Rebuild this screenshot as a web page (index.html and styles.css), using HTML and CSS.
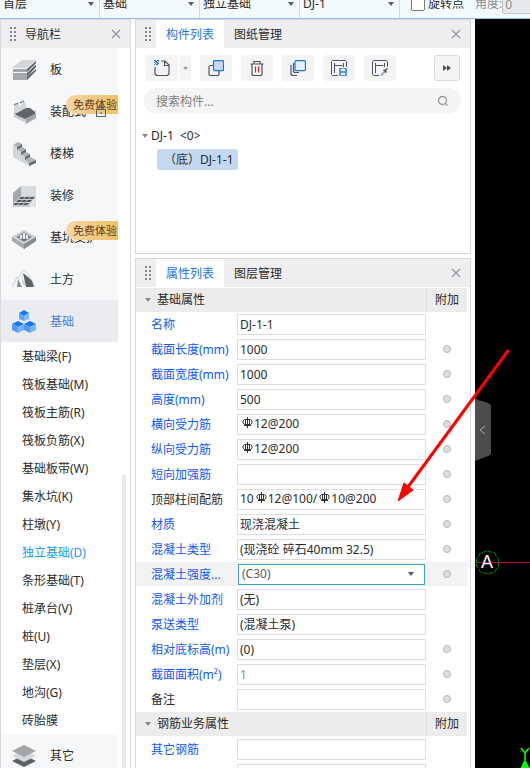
FILE: index.html
```html
<!DOCTYPE html>
<html lang="zh-CN">
<head>
<meta charset="utf-8">
<title>独立基础</title>
<link rel="stylesheet" href="styles.css">
</head>
<body>
<svg class="defs" aria-hidden="true">
  <symbol id="close" viewBox="0 0 10 10"><path d="M1 1l8 8M9 1L1 9" fill="none" stroke="#98999c" stroke-width="1.3"/></symbol>
  <symbol id="grip" viewBox="0 0 6 14"><path d="M0 0h2v2H0zM4 0h2v2H4zM0 4h2v2H0zM4 4h2v2H4zM0 8h2v2H0zM4 8h2v2H4zM0 12h2v2H0zM4 12h2v2H4z" fill="#85868a"/></symbol>
  <symbol id="down" viewBox="0 0 6 4"><path d="M0 0h6L3 4z" fill="currentColor"/></symbol>
  <symbol id="rebar" viewBox="0 0 11 12"><path d="M5.500 0v11M3.500 2v6M7.500 2v6M2 8.500h7M2.500 2.500h6l1.500 1.500v2l-1.500 1.500h-6L1 6V4z" fill="none" stroke="#333" stroke-width="1"/></symbol>
</svg>
<div class="app">
  <header class="topbar">
    <div class="pick"><select aria-label="楼层"><option>首层</option></select><svg><use href="#down"/></svg></div>
    <div class="pick"><select aria-label="类别"><option>基础</option></select><svg><use href="#down"/></svg></div>
    <div class="pick"><select aria-label="类型"><option>独立基础</option></select><svg><use href="#down"/></svg></div>
    <div class="pick"><select aria-label="构件"><option>DJ-1</option></select><svg><use href="#down"/></svg></div>
    <label class="rotate"><input type="checkbox">旋转点</label>
    <label class="angle">角度:<input type="text" value="0" disabled></label>
  </header>
  <div class="work">
    <aside class="nav">
      <div class="head"><svg class="grip"><use href="#grip"/></svg><h2>导航栏</h2><button class="close" aria-label="关闭"><svg><use href="#close"/></svg></button></div>
      <div class="navbody">
        <nav class="list">
          <a class="cat" href="#"><svg viewBox="0 0 24 24"><path d="M1 18l13 0 9-12v4l-9 12H1z" fill="#a9abad"/><path d="M1 9L10 2h14L15 10H1z" fill="#d3d5d6"/><path d="M1 11h14v3H1zM1 15h14v3H1zM1 19h14v3H1z" fill="#a5a7a9"/><path d="M15 11l9-8v2l-9 9zM15 15l9-8v2l-9 9zM15 19l9-8v2l-9 9z" fill="#5f6266"/></svg>板</a>
          <a class="cat" href="#"><svg viewBox="0 0 24 24"><path d="M2 12l9 5 13-7v5l-10 6v2L2 17z" fill="#c9cbcd"/><path d="M14 19l10-5v4l-10 6z" fill="#a4a6a9"/><path d="M3 12l6-4h9l5 4v2l-10 5-9-4z" fill="#62656a"/><path d="M2 6l5-3v4l5-5 2 1v5L5 13H2z" fill="#d4d6d7"/><path d="M2 5l4-2M8 3l4-2" stroke="#8c8f91" stroke-width="1.500"/></svg>装配式<svg class="lock" viewBox="0 0 10 12"><path d="M.5 4.500h9v7h-9zM3 4V1h4v3M5 7v2" fill="none" stroke="#555b65"/></svg><span class="badge">免费体验</span></a>
          <a class="cat" href="#"><svg viewBox="0 0 24 24"><path d="M1 3l4 2v3l4 2v3l4 2v3l4 2v4L1 15z" fill="#d3d5d6"/><path d="M1 3l5-3 4 2-5 3zM5 8l5-3 4 2-5 3zM9 13l5-3 4 2-5 3zM13 18l5-3 6 3-7 3z" fill="#b0b2b4"/><path d="M5 5l5-3v3L5 8zM9 10l5-3v3l-5 3zM13 15l5-3v3l-5 3zM17 21l7-3v3l-7 3z" fill="#66696d"/></svg>楼梯</a>
          <a class="cat" href="#"><svg viewBox="0 0 24 24"><path d="M9 2h15v11H9z" fill="#d8dadb"/><path d="M9 2v11L1 20V9z" fill="#a5a8aa"/><path d="M9 12h15l-7 11H1v-4z" fill="#c9cbcd"/><path d="M9 13h4l-2 2H7zM14 13h4l-2 2h-4zM19 13h4l-2 2h-4zM6 16h4l-2 2H4zM11 16h4l-2 2H9zM16 16h4l-2 2h-4zM3 19h4l-2 2H1zM8 19h4l-2 2H6zM13 19h4l-2 2h-4z" fill="#55585c"/><path d="M24 13v10h-6z" fill="#dfe0e1"/></svg>装修</a>
          <a class="cat" href="#"><svg viewBox="0 0 24 24"><path d="M0 11l12-7 12 7v4l-12 8-12-8z" fill="#a8aaac"/><path d="M0 11l12-7 12 7-12 7z" fill="#d3d5d6"/><path d="M4 11l8-5 8 5-8 5z" fill="#8b8e91"/><path d="M7 12l5 3 5-3-2-1-3 2-3-2z" fill="#6d7073"/><path d="M8 9h2v4H8zM11 7h2v6h-2zM14 9h2v4h-2z" fill="#eceded"/><path d="M12 18l12-7v4l-12 8z" fill="#898c8f"/></svg>基坑支护<span class="badge">免费体验</span></a>
          <a class="cat" href="#"><svg viewBox="0 0 24 24"><path d="M0 19L5 9l2 1 3-7 2-1 4 3 4 8 4 6" fill="none" stroke="#cfd1d3"/><path d="M11 5l5 4 4 4 2 6h-8z" fill="#5e6165"/><path d="M11 5v6l3 8-4-4z" fill="#d0d2d3"/><path d="M6 11l2 4 2 4H5z" fill="#8d9093"/></svg>土方</a>
          <a class="cat on" href="#"><svg viewBox="0 0 24 24"><path d="M7 3l5-3 5 3-5 3z" fill="#1877f2"/><path d="M7 3l5 3v5L7 9z" fill="#5ba4ff"/><path d="M17 3l-5 3v5l5-2z" fill="#83bcff"/><path d="M0 14l6-3 6 3-6 3zM12 14l6-3 6 3-6 3z" fill="#1877f2"/><path d="M0 14l6 3v6l-6-3zM12 14l6 3v6l-6-3z" fill="#4e9bfa"/><path d="M12 14l-6 3v6l6-3zM24 14l-6 3v6l6-3z" fill="#78b4fb"/></svg>基础</a>
          <div class="subs">
            <a href="#">基础梁(F)</a><a href="#">筏板基础(M)</a><a href="#">筏板主筋(R)</a><a href="#">筏板负筋(X)</a><a href="#">基础板带(W)</a><a href="#">集水坑(K)</a><a href="#">柱墩(Y)</a><a class="on" href="#">独立基础(D)</a><a href="#">条形基础(T)</a><a href="#">桩承台(V)</a><a href="#">桩(U)</a><a href="#">垫层(X)</a><a href="#">地沟(G)</a><a href="#">砖胎膜</a>
          </div>
          <a class="cat" href="#"><svg viewBox="0 0 24 24"><path d="M0 17l12-6 12 6-12 6z" fill="#5f6265"/><path d="M0 12l12-6 12 6-12 6z" fill="#d6d8d9"/><path d="M0 7l12-6 12 6-12 6z" fill="#a4a6a8"/></svg>其它</a>
        </nav>
        <div class="thumb"></div>
      </div>
    </aside>
    <main class="middle">
      <section class="panel">
        <div class="head"><svg class="grip"><use href="#grip"/></svg><button class="tab on">构件列表</button><button class="tab">图纸管理</button><button class="close" aria-label="关闭"><svg><use href="#close"/></svg></button></div>
        <div class="tools">
          <div class="split">
            <button class="tool" aria-label="新建"><svg viewBox="0 0 16 16"><path d="M1 7v7l1.500 1.500h11L15 14V5l-4-4H7M10.500 1v4.500H15" fill="none" stroke="#4a5263" stroke-width="1.200"/><path d="M0 0h2v1H0zM3 0h2v1H3zM1 1h2v1H1zM4 1h1v1H4zM0 2h1v1H0zM2 2h2v1H2zM1 3h1v1H1zM3 3h2v1H3zM0 4h1v1H0zM2 4h2v1H2z" fill="#1677e6"/></svg></button>
            <button class="more" aria-label="新建选项"><svg><use href="#down"/></svg></button>
          </div>
          <button class="tool" aria-label="复制"><svg viewBox="0 0 16 16"><rect x="1" y="5.500" width="10" height="10" rx="1.500" fill="none" stroke="#4a5263" stroke-width="1.200"/><rect x="5.500" y=".6" width="10" height="10" rx="1" fill="#c6d8f4" stroke="#1677e6" stroke-width="1.200"/></svg></button>
          <button class="tool" aria-label="删除"><svg viewBox="0 0 16 16"><path d="M1.500 4h13M5 4V1.500h6V4M3 4v10.500l1 1h8l1-1V4" fill="none" stroke="#4a5263" stroke-width="1.200"/><path d="M6.500 6.500v6M9.500 6.500v6" stroke="#d9202a" stroke-width="1.200"/></svg></button>
          <button class="tool" aria-label="层间复制"><svg viewBox="0 0 16 16"><path d="M3.500 3v8.500l1 1H9M1 5v9.500l1 1h5" fill="none" stroke="#4a5263" stroke-width="1.200"/><rect x="5" y=".6" width="10.400" height="10" rx="1" fill="#e6f1ff" stroke="#1677e6" stroke-width="1.200"/></svg></button>
          <button class="tool" aria-label="构件存盘"><svg viewBox="0 0 16 16"><path d="M7 15.500H1.500l-1-1v-13l1-1h13l1 1V7M3.500 3v10M3.500 5.500h8M12.500 3v4" fill="none" stroke="#4a5263"/><path d="M8 8h8v8H8z" fill="#4d9af2"/><path d="M10 9h4v2h-4zM10 13h4v2h-4z" fill="#fff"/></svg></button>
          <button class="tool" aria-label="构件提取"><svg viewBox="0 0 16 16"><path d="M7 15.500H1.500l-1-1v-13l1-1h13l1 1V7M3.500 3v10M3.500 5.500h8M12.500 3v4" fill="none" stroke="#4a5263"/><path d="M9 15.500l4-4" stroke="#8fabd2" stroke-width="2"/><path d="M11.500 9.500l3 3M13 11l2.500-2.500" stroke="#4a5263" stroke-width="1.500"/></svg></button>
          <button class="next" aria-label="更多"><svg viewBox="0 0 8 6"><path d="M0 0l4 3-4 3zM4 0l4 3-4 3z" fill="#4a5263"/></svg></button>
        </div>
        <label class="search"><input type="text" placeholder="搜索构件..." aria-label="搜索构件"><svg viewBox="0 0 12 12"><circle cx="5.500" cy="5.500" r="4" fill="none" stroke="#999" stroke-width="1.300"/><path d="M8 8l2.500 2.500" stroke="#999" stroke-width="1.300"/></svg></label>
        <div class="tree">
          <div class="root"><svg><use href="#down"/></svg>DJ-1  &lt;0&gt;</div>
          <a class="leaf" href="#">（底）DJ-1-1</a>
        </div>
      </section>
      <section class="panel props">
        <div class="head"><svg class="grip"><use href="#grip"/></svg><button class="tab on">属性列表</button><button class="tab">图层管理</button><button class="close" aria-label="关闭"><svg><use href="#close"/></svg></button></div>
        <form class="grid">
          <div class="group"><h3><svg><use href="#down"/></svg>基础属性</h3><span>附加</span></div>
          <div class="row"><label for="f1">名称</label><input class="val" id="f1" value="DJ-1-1"></div>
          <div class="row"><label for="f2">截面长度(mm)</label><input class="val" id="f2" value="1000"><input class="dot" type="checkbox" aria-label="附加 截面长度"></div>
          <div class="row"><label for="f3">截面宽度(mm)</label><input class="val" id="f3" value="1000"><input class="dot" type="checkbox" aria-label="附加 截面宽度"></div>
          <div class="row"><label for="f4">高度(mm)</label><input class="val" id="f4" value="500"><input class="dot" type="checkbox" aria-label="附加 高度"></div>
          <div class="row"><label id="l5">横向受力筋</label><div class="val" role="textbox" contenteditable="true" spellcheck="false" aria-labelledby="l5"><svg><use href="#rebar"/></svg>12@200</div><input class="dot" type="checkbox" aria-label="附加 横向受力筋"></div>
          <div class="row"><label id="l6">纵向受力筋</label><div class="val" role="textbox" contenteditable="true" spellcheck="false" aria-labelledby="l6"><svg><use href="#rebar"/></svg>12@200</div><input class="dot" type="checkbox" aria-label="附加 纵向受力筋"></div>
          <div class="row"><label for="f7">短向加强筋</label><input class="val" id="f7"><input class="dot" type="checkbox" aria-label="附加 短向加强筋"></div>
          <div class="row"><label class="plain" id="l8">顶部柱间配筋</label><div class="val" role="textbox" contenteditable="true" spellcheck="false" aria-labelledby="l8">10<svg><use href="#rebar"/></svg>12@100/<svg><use href="#rebar"/></svg>10@200</div><input class="dot" type="checkbox" aria-label="附加 顶部柱间配筋"></div>
          <div class="row"><label for="f9">材质</label><input class="val" id="f9" value="现浇混凝土"><input class="dot" type="checkbox" aria-label="附加 材质"></div>
          <div class="row"><label for="f10">混凝土类型</label><input class="val" id="f10" value="(现浇砼 碎石40mm 32.5)"><input class="dot" type="checkbox" aria-label="附加 混凝土类型"></div>
          <div class="row active"><label for="f11">混凝土强度...</label><div class="drop"><select id="f11"><option>(C30)</option></select><svg><use href="#down"/></svg></div><input class="dot" type="checkbox" aria-label="附加 混凝土强度"></div>
          <div class="row"><label for="f12">混凝土外加剂</label><input class="val" id="f12" value="(无)"></div>
          <div class="row"><label for="f13">泵送类型</label><input class="val" id="f13" value="(混凝土泵)"></div>
          <div class="row"><label for="f14">相对底标高(m)</label><input class="val" id="f14" value="(0)"><input class="dot" type="checkbox" aria-label="附加 相对底标高"></div>
          <div class="row"><label for="f15">截面面积(m²)</label><input class="val" id="f15" value="1" disabled><input class="dot" type="checkbox" aria-label="附加 截面面积"></div>
          <div class="row"><label class="plain" for="f16">备注</label><input class="val" id="f16"><input class="dot" type="checkbox" aria-label="附加 备注"></div>
          <div class="group"><h3><svg><use href="#down"/></svg>钢筋业务属性</h3><span>附加</span></div>
          <div class="row"><label for="f17">其它钢筋</label><input class="val" id="f17"></div>
          <div class="row"><label></label><input class="val" aria-label="备用"></div>
        </form>
      </section>
    </main>
    <section class="canvas" aria-label="绘图区">
      <button class="handle" aria-label="收起"><svg viewBox="0 0 16 62"><path d="M0 0l13 4q3 1 3 3v47q0 2-3 3L0 62z" fill="#4d4d4d"/><path d="M10 27l-5 4 5 4" fill="none" stroke="#a5a5a5"/></svg></button>
      <div class="axis"></div>
      <div class="bubble"><svg viewBox="0 0 25 25"><path d="M12.500 1l7 2 4 6v7l-4 6-7 2-7-2-4-6V9l4-6z" fill="none" stroke="#008a00" stroke-dasharray="5 1"/></svg><span>A</span></div>
      <div class="ucs"><svg viewBox="0 0 10 22"><path d="M1 1l4 5 4-5M5 6v7" fill="none" stroke="#0f0" stroke-width="1.500"/><path d="M5 12l5 10H0z" fill="#0f0"/></svg></div>
      <svg class="pointer" viewBox="0 0 114 154"><path d="M110.500 2L10 139" stroke="#f00" stroke-width="3"/><path d="M0 153l6-18 9 7z" fill="#f00" stroke="#f00"/></svg>
    </section>
  </div>
</div>
</body>
</html>
```
FILE: styles.css
```css
* { box-sizing: border-box; }
body {
  margin: 0;
  font: 12px/18px "Noto Sans", "Noto Sans CJK SC", sans-serif;
  color: #2b2b2b;
  background: #fff;
}
button, input, select {
  font: inherit;
  color: inherit;
  margin: 0;
  padding: 0;
  border: 0;
  border-radius: 0;
  background: none;
  appearance: none;
  outline: 0;
}
a { color: inherit; text-decoration: none; }
h2, h3 { margin: 0; font: inherit; }
svg { display: block; flex: none; }
.defs { position: absolute; width: 0; height: 0; }

.app { display: flex; flex-direction: column; height: 100vh; overflow: hidden; }

.topbar {
  display: flex;
  flex: none;
  align-items: flex-end;
  height: 19px;
  overflow: hidden;
  white-space: nowrap;
  background: #f3fafe;
  border-bottom: 1px solid #8fc1f3;
}
.pick {
  display: flex;
  flex: none;
  align-items: center;
  width: 100px;
  height: 28px;
  padding: 0 5px 0 3px;
  border-right: 1px solid #d5d9dd;
  color: #555b68;
}
.pick select { flex: 1; min-width: 0; color: #2b2b2b; }
.pick svg { width: 6px; height: 4px; }
.rotate { display: flex; flex: none; align-items: center; height: 28px; margin-left: 11px; gap: 3px; }
.rotate input { width: 14px; height: 14px; background: #fff; border: 1px solid #777; border-radius: 2px; }
.angle { display: flex; flex: none; align-items: center; height: 28px; margin-left: 11px; color: #8b8d90; }
.angle input { width: 60px; height: 20px; padding-left: 2px; background: #e7e8ea; border: 1px solid #c5c8cb; border-radius: 2px; }

.work { display: flex; flex: 1; min-height: 0; gap: 4px; }

.head { display: flex; flex: none; align-items: center; height: 28px; background: #eeeef0; }
.grip { width: 6px; height: 14px; margin: 0 5px 0 9px; }
.close { margin-left: auto; padding: 9px; }
.close svg { width: 10px; height: 10px; }
.tab { height: 28px; padding: 2px 10px 0; }
.tab.on { color: #1a75e8; background: #fff; }

.nav {
  display: flex;
  flex: none;
  flex-direction: column;
  width: 131px;
  border: solid #d9d9db;
  border-width: 1px 1px 0;
}
.nav h2 { margin-left: 4px; padding-top: 2px; }
.navbody { display: flex; flex: 1; min-height: 0; overflow: hidden; }
.list { flex: none; width: 117px; }
.cat {
  position: relative;
  display: flex;
  align-items: center;
  height: 42px;
  padding: 2px 0 0 11px;
  overflow: hidden;
  white-space: nowrap;
  background: #f5f7f9;
}
.cat > svg:first-child { width: 24px; height: 24px; margin-right: 14px; }
.cat.on { background: #ebecf0; color: #4a7bdc; }
.badge {
  position: absolute;
  top: 5px;
  right: 0;
  padding: 1px 0 0 7px;
  width: 52px;
  height: 19px;
  font-size: 11px;
  color: #633d12;
  border-radius: 10px 0 0 10px;
  background: linear-gradient(90deg, #f5d6a5, #ecc168);
}
.lock { position: absolute; z-index: 1; top: 15px; left: 95px; width: 10px; height: 12px; }
.subs a { display: flex; align-items: center; height: 28px; padding: 2px 0 0 21px; }
.subs .on { color: #1a9be8; }
.thumb { width: 4px; margin: 427px 0 0 4px; background: #e9e9e9; }

.middle { display: flex; flex: none; flex-direction: column; gap: 4px; width: 336px; }
.panel { flex: none; height: 235px; border: 1px solid #d7d7d9; }
.props { flex: 1; min-height: 0; overflow: hidden; border-bottom: 0; }

.tools { display: flex; gap: 9px; padding: 7px 10px; }
.split { display: flex; gap: 1px; }
.tool, .more, .next {
  display: flex;
  align-items: center;
  justify-content: center;
  width: 32px;
  height: 26px;
  border-radius: 3px;
  background: #f4f4f4;
}
.tool svg { width: 16px; height: 16px; }
.more { width: 12px; color: #909195; }
.more svg { width: 5px; height: 3px; }
.next { width: 26px; margin-left: auto; border: 1px solid #dcdcde; }
.next svg { width: 8px; height: 6px; }
.search {
  display: flex;
  align-items: center;
  height: 26px;
  margin: 0 9px 0 8px;
  padding: 0 12px;
  border-radius: 13px;
  background: #f4f4f4;
}
.search input { flex: 1; min-width: 0; padding-top: 2px; }
.search input::placeholder { color: #808080; opacity: 1; }
.search svg { width: 12px; height: 12px; }
.tree { padding: 12px 0 0 6px; }
.root { display: flex; align-items: center; gap: 3px; height: 20px; white-space: pre; }
.root svg { width: 6px; height: 4px; color: #87898c; }
.leaf {
  display: inline-flex;
  align-items: center;
  height: 21px;
  margin: 3px 0 0 15px;
  padding: 0 4px 0 7px;
  border-radius: 3px;
  background: #c2d9f1;
}

.grid { margin: 1px 3px 0 0; }
.group, .row { display: flex; align-items: center; height: 24px; margin-bottom: 1px; }
.group { background: #ececec; }
.group:first-child { margin-bottom: 0; }
.group h3 { display: flex; flex: 1; align-items: center; }
.group h3 svg { width: 6px; height: 4px; margin: 0 6px 0 9px; color: #87898c; }
.group span { width: 41px; line-height: 24px; text-align: center; border-left: 1px solid #dadada; }
.row label { flex: none; width: 101px; padding: 2px 0 0 15px; white-space: nowrap; color: #1058ff; }
.row label.plain { color: #2b2b2b; }
.val {
  display: flex;
  align-items: center;
  width: 189px;
  height: 21px;
  padding: 0 2px;
  white-space: pre;
  background: #fff;
  border: 1px solid #dcdcde;
}
.val:disabled { color: #8c8c8c; }
.val svg { width: 11px; height: 12px; margin: 0 1px 2px 2px; }
.dot { width: 8px; height: 8px; margin-left: 17px; border: 1px solid #b4b6b9; border-radius: 50%; background: #dddee0; }
.active { background: #f3f3f3; }
.drop {
  display: flex;
  align-items: center;
  width: 187px;
  height: 21px;
  margin: 0 1px;
  padding: 0 10px 0 3px;
  color: #555b68;
  background: #fff;
  border: 1px solid #38a3d1;
}
.drop select { flex: 1; min-width: 0; }
.drop svg { width: 6px; height: 4px; }

.canvas { position: relative; flex: 1; min-width: 0; background: #000; }
.handle { position: absolute; top: 380px; left: 0; }
.handle svg { width: 16px; height: 62px; }
.axis { position: absolute; top: 543px; left: 0; right: 0; height: 1px; background: #d40000; }
.bubble { position: absolute; top: 531px; left: 0; width: 24px; height: 25px; }
.bubble svg { width: 25px; height: 25px; }
.bubble span { position: absolute; inset: 0; font: 18px/25px "Liberation Sans", sans-serif; text-align: center; color: #fff; }
.ucs { position: absolute; top: 728px; left: 45px; }
.ucs svg { width: 10px; height: 22px; }
.pointer { position: absolute; top: 329px; left: -77px; width: 114px; height: 154px; pointer-events: none; }
```
